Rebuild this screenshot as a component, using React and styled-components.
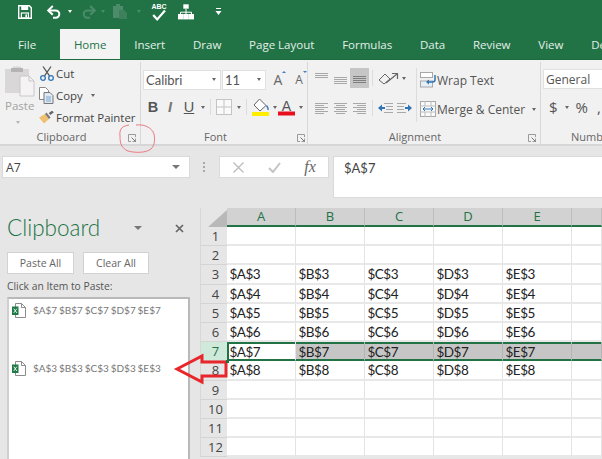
import React from "react";
import styled, { createGlobalStyle } from "styled-components";

const Global = createGlobalStyle`
  html, body { margin: 0; padding: 0; background: #e6e6e6; }
  * { box-sizing: border-box; }
`;
const ui = `"Open Sans", "Noto Sans", sans-serif`;
const calibri = `Lato, "Open Sans", sans-serif`;
const GREEN = "#217346";

const Page = styled.div`
  position: relative; width: 602px; height: 459px; overflow: hidden;
  background: #e6e6e6; font-family: ${ui}; color: #444;
`;
const QuickBar = styled.div`
  height: 29px; background: ${GREEN}; display: flex; align-items: center; padding: 0 0 6px 18px;
`;
const QuickSlot = styled.div`
  width: ${p => p.$w}px; display: flex; align-items: center; flex: none;
`;
const TabBar = styled.div`
  height: 31px; background: ${GREEN}; display: flex; padding-left: 4px; white-space: nowrap; border-bottom: 1px solid #1d6a40;
`;
const Tab = styled.div`
  height: 30px; padding: 6px 13.9px 0; font-size: 11.5px; line-height: 20px; flex: none;
  margin-left: ${p => p.$ml || 0}px;
  color: ${p => (p.$active ? GREEN : "#e4efe8")};
  background: ${p => (p.$active ? "#f3f3f3" : "transparent")};
`;
const Ribbon = styled.div`
  height: 86px; background: #f1f1f1; border-bottom: 2px solid #d6d6d6; display: flex; overflow: hidden;
`;
const Group = styled.div`
  position: relative; flex: none; width: ${p => p.$w}px; height: 82px; margin-top: 2px;
  border-right: ${p => (p.$last ? "none" : "1px solid #d8d8d8")};
  display: flex; flex-direction: column;
`;
const GroupBody = styled.div`
  height: 68px; display: flex;
`;
const GroupLabel = styled.div`
  flex: 1; display: flex; align-items: center; justify-content: center; font-size: 11px; color: #666;
  padding-left: ${p => p.$pl || 0}px; padding-right: ${p => p.$pr || 0}px; white-space: nowrap;
`;
const Launcher = styled.svg`
  position: absolute; right: ${p => p.$r}px; bottom: 2px; width: 8px; height: 8px;
`;
const PasteColumn = styled.div`
  width: 38px; padding: 3px 0 0 5px; display: flex; flex-direction: column; align-items: flex-start; flex: none;
`;
const PasteText = styled.div`
  font-size: 11.5px; color: #a3a3a3; line-height: 14px; margin-top: 2px;
`;
const ClipColumn = styled.div`
  display: flex; flex-direction: column; margin-left: 1px;
`;
const ClipRow = styled.div`
  height: 22px; display: flex; align-items: center; gap: 2px; font-size: 11.4px; white-space: nowrap; color: #444;
`;
const ClipIcon = styled.span`
  width: 15px; height: 17px; display: flex; align-items: center; justify-content: center; flex: none;
`;
const Caret = styled.span`
  display: inline-block; width: 0; height: 0; flex: none;
  border-left: 2.5px solid transparent; border-right: 2.5px solid transparent;
  border-top: 3px solid ${p => p.$c || "#666"};
  margin-left: ${p => p.$ml ?? 5}px; margin-right: ${p => p.$mr || 0}px;
`;
const FontBody = styled.div`
  padding: 7px 0 0 2px; display: flex; flex-direction: column;
`;
const ComboRow = styled.div`
  display: flex; align-items: center; height: 21px;
`;
const Combo = styled.div`
  width: ${p => p.$w}px; height: 20px; background: #fff; border: 1px solid #e0e0e0; margin-right: 1px; padding: 0 4px 0 2px;
  display: flex; align-items: center; justify-content: space-between;
  font-family: ${ui}; font-size: 12px; color: #555;
`;
const GrowA = styled.span`
  font-size: ${p => p.$s}px; color: #666; margin-left: ${p => p.$ml}px; position: relative; line-height: 14px; width: 12px; text-align: center;
`;
const TinyUp = styled.i`
  position: absolute; top: -2px; right: -2px; width: 0; height: 0; border-left: 2px solid transparent; border-right: 2px solid transparent;
  border-${p => p.$down ? "top" : "bottom"}: 2.5px solid #3f7fc1;
`;
const FormatRow = styled.div`
  display: flex; align-items: center; height: 22px; margin-top: 6px; padding-left: 3px;
`;
const StyleGlyph = styled.span`
  font-family: "Liberation Sans", sans-serif; font-size: 14.5px; line-height: 18px; color: #555; width: ${p => p.$w}px; text-align: center; flex: none;
  font-weight: ${p => (p.$b ? 700 : 400)}; font-style: ${p => (p.$i ? "italic" : "normal")};
  text-decoration: ${p => (p.$u ? "underline" : "none")};
`;
const MiniSep = styled.span`
  width: 1px; height: ${p => p.$h || 16}px; background: #dcdcdc; margin: 0 ${p => p.$m || 4}px; flex: none;
`;
const AlignBody = styled.div`
  display: flex; padding: 6px 0 0 4px;
`;
const AlignIcons = styled.div`
  display: flex; flex-direction: column; gap: 10px; flex: none; width: 102px;
`;
const AlignRow = styled.div`
  display: flex; align-items: center; height: 20px;
`;
const IconCell = styled.span`
  width: ${p => p.$w}px; height: 20px; display: flex; align-items: center; justify-content: center; flex: none;
  background: ${p => (p.$on ? "#c6c6c6" : "transparent")};
`;
const Divider = styled.div`
  width: 1px; height: 54px; background: #dcdcdc; margin: 0 3px 0 2px; flex: none;
`;
const WrapColumn = styled.div`
  display: flex; flex-direction: column; gap: 7px; padding-top: 1px;
`;
const WrapRow = styled.div`
  height: 22px; display: flex; align-items: center; gap: 1px; font-size: 12px; color: #555; white-space: nowrap;
`;
const NumberBody = styled.div`
  padding: 7px 0 0 2px; display: flex; flex-direction: column;
`;
const NumberRow = styled.div`
  display: flex; align-items: center; height: 22px; margin-top: 7px; padding-left: 6px; font-size: 15px; color: #555; white-space: nowrap;
`;
const FormulaRow = styled.div`
  display: flex; padding: 10px 0 0 2px; align-items: flex-start;
`;
const NameBox = styled.div`
  width: 188px; height: 22px; background: #fff; border: 1px solid #dadada; display: flex; align-items: center; justify-content: space-between;
  padding: 0 9px 0 3px; font-size: 12.3px; color: #444; flex: none;
`;
const Grip = styled.div`
  width: 2px; height: 11px; margin: 6px 14px 0 13px; flex: none;
  background: repeating-linear-gradient(to bottom, #a8a8a8 0 2px, transparent 2px 4px);
`;
const FxBox = styled.div`
  width: 110px; height: 22px; background: #fff; border: 1px solid #dadada; display: flex; align-items: center; flex: none; margin-right: 4px;
`;
const FxSlot = styled.span`
  width: 36.5px; display: flex; justify-content: center; align-items: center;
`;
const FxText = styled.span`
  font-family: "Liberation Serif", serif; font-style: italic; font-size: 16px; color: #666;
`;
const FormulaInput = styled.div`
  flex: 1; height: 42px; background: #fff; border: 1px solid #dadada; border-right: none; padding: 3px 0 0 10px;
  font-family: ${calibri}; font-size: 13px; color: #444;
`;
const Workspace = styled.div`
  display: flex; margin-top: 10px;
`;
const TaskPane = styled.div`
  width: 190px; margin-right: 10px; padding: 7px 0 0 7px; flex: none; display: flex; flex-direction: column;
`;
const PaneHead = styled.div`
  display: flex; align-items: center; height: 26px;
`;
const PaneTitle = styled.div`
  font-family: ${calibri}; font-weight: 300; font-size: 22.5px; line-height: 26px; color: ${GREEN}; width: 127px;
`;
const PaneClose = styled.svg`
  width: 9px; height: 9px; margin-left: 33px; flex: none;
`;
const PaneButtons = styled.div`
  display: flex; gap: 9px; margin-top: 11px;
`;
const PaneButton = styled.div`
  width: ${p => p.$w}px; height: 22px; background: #fff; border: 1px solid #d2d2d2; font-size: 10.5px; color: #666;
  display: flex; align-items: center; justify-content: center;
`;
const PaneHint = styled.div`
  font-size: 10.3px; line-height: 15px; color: #555; margin-top: 5px; white-space: nowrap;
`;
const ClipList = styled.div`
  margin-top: 3px; width: 183px; height: 170px; background: #fff; border: 2px solid #b9b9b9; border-left-color: #cfcfcf; border-bottom: none;
  padding: 4px 0 0 3px; display: flex; flex-direction: column; gap: 44px;
`;
const ClipItem = styled.div`
  display: flex; align-items: center; gap: 7px; height: 14px; font-family: ${calibri}; font-size: 10px; color: #777; white-space: nowrap; word-spacing: -.7px;
`;
const Sheet = styled.div`
  display: grid; width: 402px; flex: none;
  grid-template-columns: 27px repeat(5, 69px) 1fr;
  grid-template-rows: 19px repeat(12, 19.2px);
`;
const Corner = styled.div`
  background: #e6e6e6; border-left: 1px solid #d8d8d8; position: relative;
`;
const CornerMark = styled.svg`
  position: absolute; right: 0; bottom: 0; width: 20px; height: 17px;
`;
const ColHead = styled.div`
  background: #d2d2d2; border-right: 1px solid #bdbdbd; border-bottom: 2px solid ${GREEN}; color: ${GREEN};
  display: flex; align-items: center; justify-content: center; font-size: 13px; line-height: 1;
`;
const RowHead = styled.div`
  background: ${p => (p.$on ? "#cfeadb" : "#e6e6e6")}; color: ${p => (p.$on ? GREEN : "#444")};
  border-left: 1px solid #d8d8d8; border-bottom: 1px solid #d4d4d4;
  display: flex; align-items: center; justify-content: center; font-size: 13px; padding-left: 3px;
`;
const Cell = styled.div`
  background: ${p => (p.$row7 && !p.$first ? "#c6c6c6" : "#fff")};
  border-right: 1px solid ${p => (p.$row7 && !p.$first ? "#b4b4b4" : "#e3e3e3")};
  border-bottom: 2px solid #e8e8e8;
  box-shadow: ${p => (p.$row7 ? `inset 0 2px 0 ${GREEN}, inset 0 -1px 0 ${GREEN}` + (p.$first ? `, inset 2px 0 0 ${GREEN}` : "") : "none")};
  font-family: ${calibri}; font-size: 13.5px; letter-spacing: -.5px; color: #222; padding: 1px 0 0 2.5px; display: flex; align-items: center; white-space: nowrap;
  ${p => (p.$row7 ? `border-bottom: 1px solid ${GREEN};` : "")}
`;
const Overlay = styled.svg`
  position: absolute; left: 0; top: 0; width: 602px; height: 459px; pointer-events: none;
`;

const W = "#fff";

const Save = () => (
  <svg width="14" height="14" viewBox="0 0 14 14"><path d="M.7.7h10.6l2 2v10.6H.7z" fill="none" stroke={W} strokeWidth="1.4"/><rect x="3.2" y="1" width="7" height="4" fill={W}/><rect x="3.4" y="8" width="7" height="5" fill="none" stroke={W} strokeWidth="1.2"/><rect x="7.4" y="9.4" width="1.6" height="3" fill={W}/></svg>
);
const Undo = ({ c, flip }) => (
  <svg width="14" height="14" viewBox="0 0 14 14" style={flip ? { transform: "scaleX(-1)" } : undefined}><path d="M1.6 5.4h7a3.6 3.6 0 0 1 0 7.4H6" fill="none" stroke={c} strokeWidth="2"/><path d="M5.8 1 1.2 5.4l4.6 4.4" fill="none" stroke={c} strokeWidth="2"/></svg>
);
const PasteMini = () => (
  <svg width="15" height="15" viewBox="0 0 15 15"><path d="M0 2h3V0h4v2h3v12H0z" fill="#4d8c6a"/><path d="M6 6h5l3 3v6H6z" fill="#3e7f5c"/></svg>
);
const AbcCheck = () => (
  <svg width="16" height="20" viewBox="0 0 16 20" style={{ display: "block" }}>
    <path d="M2.2 13l4 4.4L14 8.6" fill="none" stroke={W} strokeWidth="2.2"/>
    <text x="8" y="7" textAnchor="middle" fill={W} fontSize="7" fontWeight="700" fontFamily="'Liberation Sans', sans-serif">ABC</text>
  </svg>
);
const OrgChart = () => (
  <svg width="16" height="16" viewBox="0 0 16 16" fill={W}><rect x="5" y="0" width="6" height="5" stroke="#217346" strokeWidth=".6"/><path d="M8 5v3M2.5 11V8.2h11V11M8 8v3" stroke={W} strokeWidth="1" fill="none"/><rect y="10" width="5.4" height="5.4"/><rect x="5.3" y="10" width="5.4" height="5.4"/><rect x="10.6" y="10" width="5.4" height="5.4"/></svg>
);
const Customize = () => (
  <svg width="7" height="8" viewBox="0 0 7 8" fill={W}><rect x="1" y="0" width="5" height="1"/><path d="M.5 3h6L3.5 7z"/></svg>
);
const PasteIcon = () => (
  <svg width="30" height="32" viewBox="0 0 30 32" style={{ flex: "none" }}>
    <path d="M0 4h8V1.5h8V4h8v24H0z" fill="#d9d7d7"/><rect x="6" y="3" width="12" height="4" fill="#b5b3b3"/>
    <path d="M15 11h9l5 5v15H15z" fill="#f5f3f3" stroke="#c9c7c7"/><path d="M24 11v5h5" fill="none" stroke="#c9c7c7"/>
  </svg>
);
const Scissors = () => (
  <svg width="14" height="15" viewBox="0 0 14 15"><path d="M3 .5l6.5 9.4M11 .5L4.500 9.900" stroke="#555" strokeWidth="1.300" fill="none"/><circle cx="3" cy="12" r="2.300" fill="none" stroke="#2f75b5" strokeWidth="1.300"/><circle cx="11" cy="12" r="2.300" fill="none" stroke="#2f75b5" strokeWidth="1.300"/></svg>
);
const CopyIcon = () => (
  <svg width="15" height="17" viewBox="0 0 15 17"><path d="M.5.5h6l3 3v9H.5z" fill="#fff" stroke="#888"/><path d="M5 5.500h6l3 3v8H5z" fill="#dfeaf5" stroke="#777"/><path d="M7 10h5M7 12h5M7 14h5" stroke="#7fa6cc"/></svg>
);
const Painter = () => (
  <svg width="15" height="13" viewBox="0 0 15 13"><path d="M0 6.500 6 3l4 5-5 4.500z" fill="#eec06f"/><path d="M6 3l4 5 1.500-1.500-4-5z" fill="#777"/><path d="M10.500 3 14 .5" stroke="#666" strokeWidth="2.400"/></svg>
);
const BorderIcon = () => (
  <svg width="16" height="16" viewBox="0 0 16 16"><rect x=".5" y=".5" width="15" height="15" fill="#fafafa" stroke="#c4c4c4"/><path d="M8 0v16M0 8h16" stroke="#c4c4c4"/></svg>
);
const FillIcon = () => (
  <svg width="18" height="18" viewBox="0 0 18 18"><path d="M7.500 1 2 7l6 6 6-5.500z" fill="#fff" stroke="#666"/><path d="M14.500 7.500c1.500 2 2 3 1.500 4.500" stroke="#3f7fc1" strokeWidth="1.500" fill="none"/><rect y="14" width="17" height="4" fill="#ffee00"/></svg>
);
const FontColor = () => (
  <svg width="17" height="18" viewBox="0 0 17 18"><text x="8.500" y="13" textAnchor="middle" fontSize="14" fill="#555" fontFamily="'Liberation Sans', sans-serif">A</text><rect y="13.500" width="17" height="4" fill="#e8101c"/></svg>
);
const Lines = ({ kind, w = 13 }) => {
  const ys = kind === "top" ? [2, 4, 6] : kind === "mid" ? [6, 8, 10, 12] : [2, 4, 6, 8, 10, 12];
  const size = (i) => {
    if (kind === "left") return [0, i % 2 ? 9 : w];
    if (kind === "right") return [i % 2 ? w - 9 : 0, w];
    if (kind === "center") return [i % 2 ? 2 : 0, i % 2 ? w - 2 : w];
    return [0, w];
  };
  return (
    <svg width={w} height="14" viewBox={`0 0 ${w} 14`}>
      {ys.map((y, i) => { const [a, b] = size(i); return <path key={y} d={`M${a} ${y + .5}H${b}`} stroke="#a8a8a8"/>; })}
    </svg>
  );
};
const BottomAlign = () => (
  <svg width="13" height="14" viewBox="0 0 13 14"><path d="M0 5.500h13M0 7.500h13M0 9.500h13M0 11.500h13" stroke="#7f7f7f"/></svg>
);
const Orientation = () => (
  <svg width="22" height="14" viewBox="0 0 22 14"><path d="M1 9l6-6 5 5-6 5z" fill="none" stroke="#666"/><path d="M8 12 19 3M14 2.500h5.500V8" fill="none" stroke="#666" strokeWidth="1.200"/></svg>
);
const Indent = ({ flip }) => (
  <svg width="15" height="12" viewBox="0 0 15 12" style={flip ? { transform: "scaleX(-1)" } : undefined}><path d="M6 1.500h9M8 4.500h7M8 7.500h7M6 10.500h9" stroke="#a8a8a8"/><path d="M0 6l4-3.500V5h3v2H4v2.500z" fill="#2f75b5"/></svg>
);
const WrapIcon = () => (
  <svg width="16" height="16" viewBox="0 0 16 16"><rect x=".5" y=".5" width="12" height="5" fill="#fff" stroke="#a8a8a8"/><rect x=".5" y="9" width="12" height="6" fill="#e6eef6" stroke="#a8a8a8"/><path d="M8 10h4.500a2.500 2.500 0 0 0 2.500-2.500V3" fill="none" stroke="#2f75b5" strokeWidth="1.500"/><path d="M6 10l3-2.500v5z" fill="#2f75b5"/></svg>
);
const MergeIcon = () => (
  <svg width="16" height="16" viewBox="0 0 16 16"><rect x=".5" y=".5" width="15" height="15" fill="#fafafa" stroke="#a8a8a8"/><path d="M0 5h16M0 11h16M5 0v5M11 0v5M5 11v5M11 11v5" stroke="#bbb"/><path d="M3 8h10M5 6l-2 2 2 2M11 6l2 2-2 2" fill="none" stroke="#2f75b5"/></svg>
);
const XlDoc = () => (
  <svg width="14" height="15" viewBox="0 0 14 15" style={{ flex: "none" }}>
    <path d="M3.500.5h6l4 4v10h-10z" fill="#fff" stroke="#8c8c8c"/><path d="M9.500.5v4h4" fill="none" stroke="#8c8c8c"/>
    <rect x="0" y="3.500" width="6.500" height="8.500" fill="#1f7a46"/>
    <path d="M1.800 5.700l3 4.200m0-4.200l-3 4.200" stroke="#fff" strokeWidth=".9"/>
  </svg>
);
const LauncherMark = ({ r }) => (
  <Launcher $r={r} viewBox="0 0 8 8"><path d="M7.500 3V.5H.5v7H3" fill="none" stroke="#9a9a9a"/><path d="M3.500 3.500 7.500 7.500M7.800 4.500v3.300H4.500" fill="none" stroke="#777"/></Launcher>
);

const rows = [1, 2, 3, 4, 5, 6, 7, 8, 9, 10, 11, 12];
const cols = ["A", "B", "C", "D", "E"];
const hasData = (r) => r >= 3 && r <= 8;

export default function App() {
  return (
    <Page>
      <Global />
      <QuickBar>
        <QuickSlot $w={29}><Save /></QuickSlot>
        <QuickSlot $w={35}><Undo c={W} /><Caret $c={W} $ml={7} /></QuickSlot>
        <QuickSlot $w={31}><Undo c="#4d8c6a" flip /><Caret $c="#4d8c6a" $ml={5} /></QuickSlot>
        <QuickSlot $w={38}><PasteMini /><Caret $c="#4d8c6a" $ml={9} /></QuickSlot>
        <QuickSlot $w={27}><AbcCheck /></QuickSlot>
        <QuickSlot $w={37}><OrgChart /></QuickSlot>
        <QuickSlot $w={10}><Customize /></QuickSlot>
      </QuickBar>
      <TabBar>
        <Tab>File</Tab>
        <Tab $active $ml={10}>Home</Tab>
        <Tab>Insert</Tab>
        <Tab>Draw</Tab>
        <Tab>Page Layout</Tab>
        <Tab>Formulas</Tab>
        <Tab>Data</Tab>
        <Tab>Review</Tab>
        <Tab>View</Tab>
        <Tab>De</Tab>
      </TabBar>
      <Ribbon>
        <Group $w={141}>
          <GroupBody>
            <PasteColumn>
              <PasteIcon />
              <PasteText>Paste</PasteText>
              <Caret $c="#b5b5b5" $ml={11} style={{ marginTop: 8 }} />
            </PasteColumn>
            <ClipColumn>
              <ClipRow><ClipIcon><Scissors /></ClipIcon>Cut</ClipRow>
              <ClipRow><ClipIcon><CopyIcon /></ClipIcon>Copy<Caret $ml={6} /></ClipRow>
              <ClipRow><ClipIcon><Painter /></ClipIcon>Format Painter</ClipRow>
            </ClipColumn>
          </GroupBody>
          <GroupLabel $pr={17}>Clipboard</GroupLabel>
          <LauncherMark r={4} />
        </Group>
        <Group $w={167}>
          <FontBody as={GroupBody}>
            <div>
              <ComboRow>
                <Combo $w={78} style={{ fontFamily: calibri, fontSize: 13 }}>Calibri<Caret /></Combo>
                <Combo $w={44} style={{ fontFamily: calibri, fontSize: 13 }}>11<Caret /></Combo>
                <GrowA $s={14} $ml={5}>A<TinyUp /></GrowA>
                <GrowA $s={12} $ml={9}>A<TinyUp $down /></GrowA>
              </ComboRow>
              <FormatRow>
                <StyleGlyph $b $w={14}>B</StyleGlyph>
                <StyleGlyph $i $b $w={20} style={{ color: "#777" }}>I</StyleGlyph>
                <StyleGlyph $u $w={18}>U</StyleGlyph><Caret $ml={3} />
                <MiniSep $m={5} />
                <BorderIcon /><Caret $ml={5} />
                <MiniSep $m={5} />
                <FillIcon /><Caret $ml={3} />
                <span style={{ width: 1 }} />
                <FontColor /><Caret $ml={4} />
              </FormatRow>
            </div>
          </FontBody>
          <GroupLabel $pr={17}>Font</GroupLabel>
          <LauncherMark r={2} />
        </Group>
        <Group $w={233}>
          <AlignBody as={GroupBody}>
            <AlignIcons>
              <AlignRow>
                <IconCell $w={19}><Lines kind="top" /></IconCell>
                <IconCell $w={19}><Lines kind="mid" /></IconCell>
                <IconCell $w={19} $on><BottomAlign /></IconCell>
                <MiniSep $m={3} />
                <IconCell $w={26}><Orientation /></IconCell>
                <Caret $ml={0} />
              </AlignRow>
              <AlignRow>
                <IconCell $w={19}><Lines kind="left" /></IconCell>
                <IconCell $w={19}><Lines kind="center" /></IconCell>
                <IconCell $w={19}><Lines kind="right" /></IconCell>
                <MiniSep $m={3} />
                <IconCell $w={19}><Indent /></IconCell>
                <IconCell $w={19}><Indent flip /></IconCell>
              </AlignRow>
            </AlignIcons>
            <Divider />
            <WrapColumn>
              <WrapRow><WrapIcon />Wrap Text</WrapRow>
              <WrapRow><MergeIcon />Merge &amp; Center<Caret $ml={6} /></WrapRow>
            </WrapColumn>
          </AlignBody>
          <GroupLabel $pr={18}>Alignment</GroupLabel>
          <LauncherMark r={4} />
        </Group>
        <Group $w={61} $last>
          <NumberBody as={GroupBody}>
            <div>
              <Combo $w={59} style={{ justifyContent: "flex-start", borderRight: "none" }}>General</Combo>
              <NumberRow>$<Caret $ml={7} $mr={7} />%<span style={{ marginLeft: 9 }}>,</span></NumberRow>
            </div>
          </NumberBody>
          <GroupLabel $pl={30} style={{ justifyContent: "flex-start" }}>Numb</GroupLabel>
        </Group>
      </Ribbon>
      <FormulaRow>
        <NameBox>A7<Caret $c="#777" style={{ borderLeftWidth: 4, borderRightWidth: 4, borderTopWidth: 4 }} /></NameBox>
        <Grip />
        <FxBox>
          <FxSlot>
            <svg width="11" height="11" viewBox="0 0 11 11"><path d="M.5.500l10 10m0-10-10 10" stroke="#bcbcbc" strokeWidth="1.300"/></svg>
          </FxSlot>
          <FxSlot>
            <svg width="13" height="11" viewBox="0 0 13 11"><path d="M1 6l4 4 7-9" fill="none" stroke="#c4c4c4" strokeWidth="2"/></svg>
          </FxSlot>
          <FxSlot><FxText>fx</FxText></FxSlot>
        </FxBox>
        <FormulaInput>$A$7</FormulaInput>
      </FormulaRow>
      <Workspace>
        <TaskPane>
          <PaneHead>
            <PaneTitle>Clipboard</PaneTitle>
            <Caret $c="#777" $ml={0} style={{ borderLeftWidth: 4, borderRightWidth: 4, borderTopWidth: 4 }} />
            <PaneClose viewBox="0 0 9 9"><path d="M1 1l7 7m0-7-7 7" stroke="#666" strokeWidth="1.700"/></PaneClose>
          </PaneHead>
          <PaneButtons>
            <PaneButton $w={67}>Paste All</PaneButton>
            <PaneButton $w={66}>Clear All</PaneButton>
          </PaneButtons>
          <PaneHint>Click an Item to Paste:</PaneHint>
          <ClipList>
            <ClipItem><XlDoc />$A$7 $B$7 $C$7 $D$7 $E$7</ClipItem>
            <ClipItem><XlDoc />$A$3 $B$3 $C$3 $D$3 $E$3</ClipItem>
          </ClipList>
        </TaskPane>
        <Sheet>
          <Corner>
            <CornerMark viewBox="0 0 20 17"><path d="M20 0v17H1z" fill="#b9b9b9"/></CornerMark>
          </Corner>
          {cols.map((c) => <ColHead key={c}>{c}</ColHead>)}
          <ColHead />
          {rows.map((r) => (
            <React.Fragment key={r}>
              <RowHead $on={r === 7}>{r}</RowHead>
              {cols.map((c, i) => (
                <Cell key={c} $row7={r === 7} $first={i === 0}>{hasData(r) ? `$${c}$${r}` : ""}</Cell>
              ))}
              <Cell $row7={r === 7} />
            </React.Fragment>
          ))}
        </Sheet>
      </Workspace>
      <Overlay viewBox="0 0 602 459">
        <path d="M129 125c-6 1-10 3-9 11 0 7 1 12 8 15 7 2 18 2 23-2 4-4 4-10 3-15-2-6-9-10-18-9" fill="none" stroke="#ee7a84" strokeWidth="1"/>
        <path d="M177 369l25-13v6h24v14h-24v6z" fill="none" stroke="#e8262b" strokeWidth="3"/>
        <rect x="226" y="360" width="3" height="3" fill="#217346"/>
      </Overlay>
    </Page>
  );
}
